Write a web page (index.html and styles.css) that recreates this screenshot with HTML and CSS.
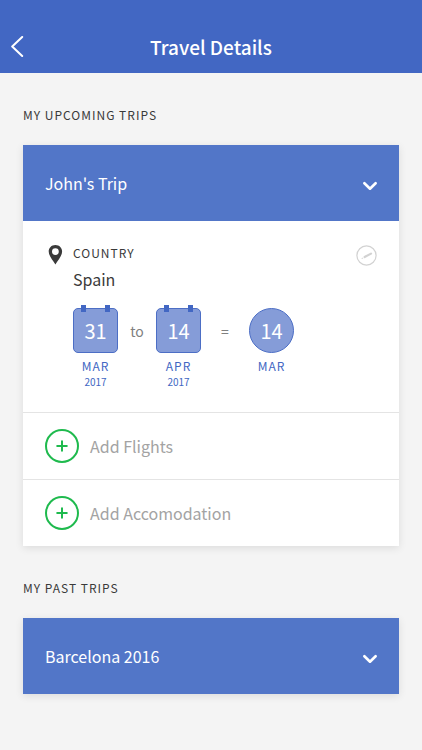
FILE: index.html
```html
<!DOCTYPE html>
<html lang="en">
<head>
    <meta charset="UTF-8">
    <meta name="viewport" content="width=device-width, initial-scale=1">
    <title>Travel Details</title>
    <link rel="stylesheet" href="styles.css">
</head>
<body>
    <header class="top-bar">
        <a href="#" class="back-link" aria-label="Back">
            <svg width="14" height="22" viewBox="0 0 14 22" fill="none" stroke="currentColor" stroke-width="2" stroke-linecap="round" stroke-linejoin="round">
                <path d="M12.2 1 L2.2 10.5 L12.2 20"/>
            </svg>
        </a>
        <h1>Travel Details</h1>
    </header>

    <main>
        <section>
            <h2 class="section-title">My upcoming trips</h2>
            <article class="trip">
                <button type="button" class="trip-header" aria-expanded="true">
                    <span>John's Trip</span>
                    <svg width="14" height="14" viewBox="0 0 14 14" fill="none" stroke="currentColor" stroke-width="2.6" stroke-linecap="round" stroke-linejoin="round">
                        <path d="M1.4 7.2 L7 12.7 L12.6 7.2"/>
                    </svg>
                </button>

                <div class="trip-body">
                    <svg class="pin" width="20" height="22" viewBox="0 0 20 22" fill="currentColor" fill-rule="evenodd">
                        <path d="M10.4 2 C6.4 2 3.7 4.9 3.7 8.6 C3.7 12.8 7.7 17 10.4 21.5 C13.1 17 17.1 12.8 17.1 8.6 C17.1 4.9 14.4 2 10.4 2 Z M10.4 5.2 A3.4 3.4 0 1 1 10.4 12 A3.4 3.4 0 1 1 10.4 5.2 Z"/>
                    </svg>
                    <div class="trip-info">
                        <h3 class="label">Country</h3>
                        <p class="country">Spain</p>
                        <div class="dates">
                            <div class="date">
                                <span class="calendar">31</span>
                                <span class="month">Mar</span>
                                <span class="year">2017</span>
                            </div>
                            <span class="joiner">to</span>
                            <div class="date">
                                <span class="calendar">14</span>
                                <span class="month">Apr</span>
                                <span class="year">2017</span>
                            </div>
                            <span class="joiner equals">=</span>
                            <div class="date">
                                <span class="total">14</span>
                                <span class="month">Mar</span>
                            </div>
                        </div>
                    </div>
                    <button type="button" class="edit-btn" aria-label="Edit trip">
                        <svg width="21" height="21" viewBox="0 0 21 21">
                            <circle cx="10.5" cy="10.5" r="9.6" fill="none" stroke="currentColor" stroke-width="1.2"/>
                            <path d="M8.6 12 L15 8.6" fill="none" stroke="currentColor" stroke-width="2.2" stroke-linecap="round"/>
                            <path d="M5.2 14 L6.4 12.4 L7.4 13.6 Z" fill="currentColor"/>
                        </svg>
                    </button>
                </div>

                <button type="button" class="add-row">
                    <svg width="34" height="34" viewBox="0 0 34 34" fill="none" stroke="currentColor" stroke-width="2" stroke-linecap="round">
                        <circle cx="17" cy="17" r="16"/>
                        <path d="M12.2 17 H21.8 M17 12.2 V21.8"/>
                    </svg>
                    <span>Add Flights</span>
                </button>
                <button type="button" class="add-row">
                    <svg width="34" height="34" viewBox="0 0 34 34" fill="none" stroke="currentColor" stroke-width="2" stroke-linecap="round">
                        <circle cx="17" cy="17" r="16"/>
                        <path d="M12.2 17 H21.8 M17 12.2 V21.8"/>
                    </svg>
                    <span>Add Accomodation</span>
                </button>
            </article>
        </section>

        <section>
            <h2 class="section-title">My past trips</h2>
            <article class="trip">
                <button type="button" class="trip-header" aria-expanded="false">
                    <span>Barcelona 2016</span>
                    <svg width="14" height="14" viewBox="0 0 14 14" fill="none" stroke="currentColor" stroke-width="2.6" stroke-linecap="round" stroke-linejoin="round">
                        <path d="M1.4 7.2 L7 12.7 L12.6 7.2"/>
                    </svg>
                </button>
            </article>
        </section>
    </main>
</body>
</html>
```
FILE: styles.css
```css
* {
    box-sizing: border-box;
}
body {
    margin: 0;
    background-color: #f4f4f4;
    color: #3a3a3a;
    font-family: "Noto Sans CJK SC", "Noto Sans", sans-serif;
    font-size: 16px;
}
h1, h2, h3, p {
    margin: 0;
    font-weight: normal;
}
button {
    font: inherit;
    border: none;
    background: none;
    padding: 0;
    cursor: pointer;
    text-align: left;
}
svg {
    display: block;
    flex: none;
}

/* Top bar */
.top-bar {
    display: grid;
    grid-template-columns: 40px 1fr 40px;
    align-items: center;
    padding-top: 21px;
    background-color: #4267c3;
    color: #ffffff;
}
.back-link {
    padding-left: 10px;
    color: inherit;
}
.top-bar h1 {
    font-size: 19px;
    font-weight: 500;
    line-height: 52px;
    text-align: center;
}

main {
    padding: 0 23px 32px;
}
.section-title {
    padding: 32px 0 20px;
    font-size: 12px;
    line-height: 20px;
    letter-spacing: 1px;
    text-transform: uppercase;
}

/* Trip card */
.trip {
    background-color: #ffffff;
    box-shadow: 0 2px 8px rgba(0, 0, 0, 0.1);
}
.trip-header {
    display: flex;
    align-items: center;
    justify-content: space-between;
    width: 100%;
    height: 76px;
    padding: 0 22px;
    background-color: #5276c8;
    color: #ffffff;
}
.trip-body {
    display: flex;
    align-items: flex-start;
    gap: 8px;
    padding: 22px 22px 24px;
}
.trip-info {
    flex: 1;
}
.label {
    font-size: 12px;
    line-height: 20px;
    letter-spacing: 1px;
    text-transform: uppercase;
}
.country {
    line-height: 32px;
}
.edit-btn {
    padding-top: 2px;
    color: #d2d2d2;
}

/* Dates */
.dates {
    display: flex;
    margin-top: 13px;
}
.date {
    display: flex;
    flex-direction: column;
    align-items: center;
    color: #4267c3;
}
.calendar,
.total {
    position: relative;
    width: 45px;
    height: 45px;
    margin-bottom: 3px;
    border: 1px solid #4c6ec5;
    border-radius: 5px;
    background-color: #859cd8;
    color: #ffffff;
    font-size: 20px;
    line-height: 44px;
    text-align: center;
}
.total {
    border-radius: 50%;
}
/* calendar rings */
.calendar::before,
.calendar::after {
    content: "";
    position: absolute;
    top: -4px;
    width: 5px;
    height: 7px;
    background-color: #4267c3;
}
.calendar::before {
    left: 7px;
}
.calendar::after {
    right: 7px;
}
.month {
    font-size: 12px;
    line-height: 20px;
    letter-spacing: 1px;
    text-transform: uppercase;
}
.year {
    font-size: 10px;
    line-height: 12px;
}
.joiner {
    width: 38px;
    color: #808080;
    font-size: 14px;
    line-height: 46px;
    text-align: center;
}
.equals {
    width: 48px;
}

/* Add rows */
.add-row {
    display: flex;
    align-items: center;
    gap: 11px;
    width: 100%;
    height: 67px;
    padding: 0 22px;
    border-top: 1px solid #e4e4e4;
    color: #a3a3a3;
}
.add-row svg {
    color: #1fba4e;
}
```
